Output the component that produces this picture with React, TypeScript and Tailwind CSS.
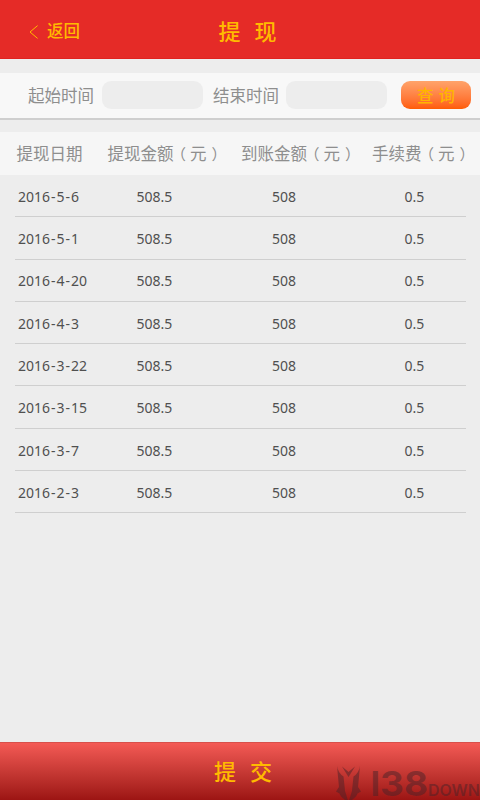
import clsx from "clsx";

const records = [
  { date: "2016-5-6", amount: "508.5", received: "508", fee: "0.5" },
  { date: "2016-5-1", amount: "508.5", received: "508", fee: "0.5" },
  { date: "2016-4-20", amount: "508.5", received: "508", fee: "0.5" },
  { date: "2016-4-3", amount: "508.5", received: "508", fee: "0.5" },
  { date: "2016-3-22", amount: "508.5", received: "508", fee: "0.5" },
  { date: "2016-3-15", amount: "508.5", received: "508", fee: "0.5" },
  { date: "2016-3-7", amount: "508.5", received: "508", fee: "0.5" },
  { date: "2016-2-3", amount: "508.5", received: "508", fee: "0.5" },
];

const Header = () => (
  <header className="flex h-[59px] items-center border-b border-[#e0231f] bg-[#e52b27] pt-1 text-[#ffba00]">
    <a className="flex w-[218.5px] items-center pl-[29px] text-[16.5px] leading-6 font-medium">
      <svg className="mt-px mr-[8px] h-[14px] w-[10px]" viewBox="0 0 10 14" fill="none">
        <path d="M8.6 0.6 L1 7 L8.6 13.4" stroke="currentColor" strokeWidth="1" />
      </svg>
      返回
    </a>
    <h1 className="flex gap-[14px] text-[22px] leading-7 font-medium">
      <span>提</span>
      <span>现</span>
    </h1>
  </header>
);

const SearchBar = () => (
  <section className="mt-[14px] flex h-[47px] items-start border-b-2 border-[#cfcfcf] bg-[#f8f8f8] pt-2 text-[16.5px] leading-[30px] text-[#8e8e8e]">
    <label className="ml-[28px] w-[74px]">起始时间</label>
    <input className="h-[28px] w-[101px] rounded-[9px] bg-[#ededed]" />
    <label className="ml-[10px] w-[73px]">结束时间</label>
    <input className="h-[28px] w-[101px] rounded-[9px] bg-[#ededed]" />
    <button className="ml-[14px] flex h-[28px] w-[70px] items-center justify-center gap-[5px] rounded-[9px] bg-linear-to-b from-[#ffa36a] to-[#ff5c00] pt-px font-medium text-[#ffb400]">
      <span>查</span>
      <span>询</span>
    </button>
  </section>
);

type UnitHeadingProps = { title: string; className?: string };

const UnitHeading = ({ title, className }: UnitHeadingProps) => (
  <div className={clsx("flex items-center whitespace-nowrap", className)}>
    {title}
    <span className="mr-[4px] ml-[5px] text-[15px] [font-feature-settings:'halt']">（</span>
    元
    <span className="ml-[5px] text-[15px] [font-feature-settings:'halt']">）</span>
  </div>
);

const DateText = ({ value }: { value: string }) => (
  <>
    {value.split("-").map((part, index) => (
      <span key={index}>
        {index > 0 && <span className="mx-px">-</span>}
        {part}
      </span>
    ))}
  </>
);

const Records = () => (
  <section className="mt-3 flex-1">
    <div className="flex h-[43px] items-center bg-[#f6f6f6] pt-[2px] pl-[16.5px] text-[16.5px] text-[#8e8e8e]">
      <div className="w-[91px]">提现日期</div>
      <UnitHeading className="w-[133.5px]" title="提现金额" />
      <UnitHeading className="w-[131px]" title="到账金额" />
      <UnitHeading title="手续费" />
    </div>
    <div className="mr-[14px] ml-[15px] text-[14px] text-[#505050]">
      {records.map((record) => (
        <div
          key={record.date}
          className="flex h-[42.3px] items-center border-b border-[#cfcfcf] pt-[1.5px] pl-[3px]"
        >
          <div className="w-[118.5px]">
            <DateText value={record.date} />
          </div>
          <div className="w-[135.5px]">{record.amount}</div>
          <div className="w-[132.5px]">{record.received}</div>
          <div>{record.fee}</div>
        </div>
      ))}
    </div>
  </section>
);

const Watermark = () => (
  <svg
    className="absolute right-0 bottom-0 h-[36px] w-[146px]"
    viewBox="0 0 146 36"
    fill="#4a2228"
    fillOpacity="0.5"
    fontFamily="Inter"
  >
    <path d="M3 2 Q4 9 9.5 12.5 L11 27 L13.8 36 H11 Q6 32 5.5 29.5 L2 27.5 L5 23 Z" />
    <path d="M26 2 Q25 9 19.5 12.5 L18 27 L15.2 36 H18 Q23 32 23.5 29.5 L27 27.5 L24 23 Z" />
    <path d="M8 2.5 L14.5 8 L21 2.5 L14.5 13 Z" />
    <g fontSize="34" fontWeight="700">
      <text x="36.5" y="32">
        I
      </text>
      <text x="46" y="32" textLength="48" lengthAdjust="spacingAndGlyphs">
        38
      </text>
    </g>
    <text x="94" y="31.5" fontSize="15.5" fontWeight="600" textLength="52" lengthAdjust="spacingAndGlyphs">
      DOWN
    </text>
  </svg>
);

const App = () => (
  <main className="flex h-[800px] w-[480px] flex-col overflow-hidden bg-[#ededed] font-['Noto_Sans','Noto_Sans_CJK_SC',sans-serif]">
    <Header />
    <SearchBar />
    <Records />
    <footer className="relative h-[58px] border-t border-[#d8504b] bg-linear-to-b from-[#f45a55] to-[#9c1413]">
      <button className="flex h-full w-full items-center justify-center gap-[14px] pl-[6px] text-[22px] font-medium text-[#ffba00]">
        <span>提</span>
        <span>交</span>
      </button>
      <Watermark />
    </footer>
  </main>
);

export default App;
